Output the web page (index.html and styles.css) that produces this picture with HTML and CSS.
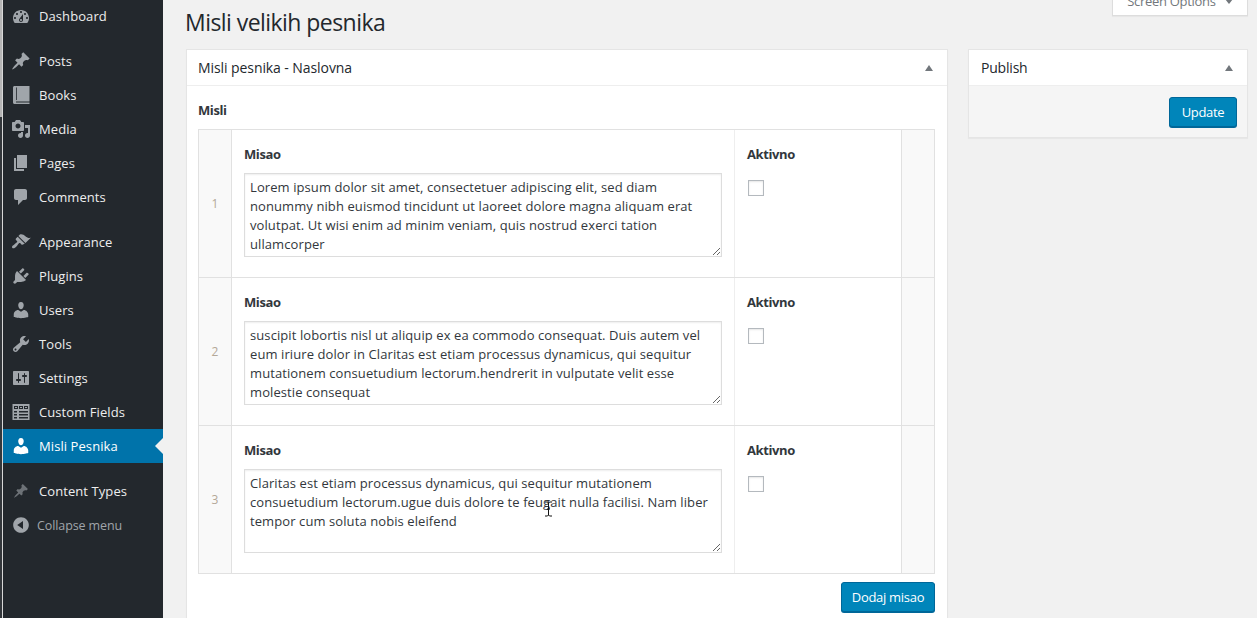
FILE: index.html
```html
<!DOCTYPE html>
<html lang="sr">
<head>
<meta charset="utf-8">
<title>Misli velikih pesnika</title>
<link rel="stylesheet" href="styles.css">
</head>
<body>
<div class="edge"></div>
<nav class="sidebar">
  <ul class="menu">
    <li class="item first"><svg class="icon" viewBox="0 0 20 20"><path d="M3.76 16h12.48c1.1-1.37 1.76-3.11 1.76-5 0-4.42-3.58-8-8-8s-8 3.58-8 8c0 1.89.66 3.63 1.76 5zM10 4c.55 0 1 .45 1 1s-.45 1-1 1-1-.45-1-1 .45-1 1-1zM6 6c.55 0 1 .45 1 1s-.45 1-1 1-1-.45-1-1 .45-1 1-1zm8 0c.55 0 1 .45 1 1s-.45 1-1 1-1-.45-1-1 .45-1 1-1zm-5.37 5.55L12 7v6c0 1.1-.9 2-2 2s-2-.9-2-2c0-.57.24-1.08.63-1.45zM4 10c.55 0 1 .45 1 1s-.45 1-1 1-1-.45-1-1 .45-1 1-1zm12 0c.55 0 1 .45 1 1s-.45 1-1 1-1-.45-1-1 .45-1 1-1zm-5 3c0-.55-.45-1-1-1s-1 .45-1 1 .45 1 1 1 1-.45 1-1z"/></svg><span>Dashboard</span></li>
    <li class="item sep"><svg class="icon" viewBox="0 0 20 20"><path d="M10.44 3.02l1.82-1.82 6.36 6.35-1.83 1.82c-1.05-.68-2.48-.57-3.41.36l-.75.75c-.92.93-1.04 2.35-.35 3.41l-1.83 1.82-2.41-2.41-2.8 2.79c-.42.42-3.38 2.71-3.8 2.29s1.86-3.39 2.28-3.81l2.79-2.79L4.1 9.36l1.83-1.82c1.05.69 2.48.57 3.4-.36l.75-.75c.93-.92 1.05-2.35.36-3.41z"/></svg><span>Posts</span></li>
    <li class="item"><svg class="icon" viewBox="0 0 20 20"><path fill-rule="evenodd" d="M3.5 1H18.500v15.500H5v1h13.500V19H3.500C2.700 19 2 18.300 2 17.500V2.500C2 1.700 2.700 1 3.500 1zM5 2.500V15h.8V2.500z"/></svg><span>Books</span></li>
    <li class="item"><svg class="icon" viewBox="0 0 20 20"><path d="M13 11V4c0-.55-.45-1-1-1h-1.670L9 1H5L3.670 3H2c-.55 0-1 .45-1 1v7c0 .55.45 1 1 1h10c.55 0 1-.45 1-1zM7 4.500c1.380 0 2.500 1.120 2.500 2.500S8.380 9.500 7 9.500 4.500 8.380 4.500 7 5.620 4.500 7 4.500zM14 6h5v10.500c0 1.380-1.120 2.500-2.500 2.500S14 17.880 14 16.500s1.120-2.500 2.500-2.500c.17 0 .34.02.5.05V9h-3V6zm-4 8.050V13h2v3.500c0 1.380-1.120 2.500-2.500 2.500S7 17.880 7 16.500 8.120 14 9.500 14c.17 0 .34.02.5.05z" fill-rule="evenodd"/></svg><span>Media</span></li>
    <li class="item"><svg class="icon" viewBox="0 0 20 20"><path d="M6 15V2h10v13H6zm-1 1h8v2H3V5h2v11z"/></svg><span>Pages</span></li>
    <li class="item"><svg class="icon" viewBox="0 0 20 20"><path d="M5 2h9c1.100 0 2 .9 2 2v7c0 1.100-.9 2-2 2h-2l-5 5v-5H5c-1.100 0-2-.9-2-2V4c0-1.100.9-2 2-2z"/></svg><span>Comments</span></li>
    <li class="item sep"><svg class="icon" viewBox="0 0 20 20"><path d="M14.480 11.060L7.410 3.990l1.500-1.500c.5-.56 2.300-.47 3.510.32 1.210.8 1.430 1.280 2.910 2.100 1.180.64 2.450 1.260 4.450.85zm-.71.71L6.700 4.700 4.930 6.470c-.39.39-.39 1.020 0 1.410l1.060 1.060c.39.39.39 1.030 0 1.420-.6.6-1.430 1.110-2.210 1.690-.35.26-.7.53-1.010.84C1.430 13.230.4 14.950 1.400 15.950s2.730-.03 4.020-1.380c.31-.31.59-.66.85-1.010.58-.78 1.080-1.610 1.690-2.210.39-.39 1.020-.39 1.410 0l1.060 1.060c.39.39 1.020.39 1.410 0z"/></svg><span>Appearance</span></li>
    <li class="item"><svg class="icon" viewBox="0 0 20 20"><path d="M13.110 4.360L9.870 7.600 8 5.730l3.240-3.240c.35-.34 1.050-.2 1.560.32.52.51.66 1.210.31 1.550zm-8 1.770l.91-1.120 9.010 9.010-1.190.84c-.71.71-2.630 1.160-3.820 1.160H6.140L4.900 17.260c-.59.59-1.540.59-2.120 0-.59-.58-.59-1.530 0-2.120l1.240-1.240v-3.880c0-1.130.4-3.190 1.090-3.890zm7.260 3.970l3.240-3.240c.34-.35 1.040-.21 1.550.31.52.51.66 1.210.31 1.550l-3.240 3.250z"/></svg><span>Plugins</span></li>
    <li class="item"><svg class="icon" viewBox="0 0 20 20"><use href="#user"/></svg><span>Users</span></li>
    <li class="item"><svg class="icon" viewBox="0 0 20 20"><path fill-rule="evenodd" d="M16.680 9.770c-1.340 1.340-3.300 1.670-4.950.99l-5.410 6.520c-.99.99-2.590.99-3.580 0s-.99-2.590 0-3.570l6.520-5.420c-.68-1.650-.35-3.610.99-4.950 1.280-1.280 3.120-1.620 4.720-1.060l-2.890 2.890 2.820 2.820 2.860-2.870c.53 1.580.18 3.390-1.080 4.650zM3.810 16.210c.4.39 1.040.39 1.430 0 .4-.4.4-1.040 0-1.430-.39-.4-1.030-.4-1.430 0-.39.39-.39 1.030 0 1.430z"/></svg><span>Tools</span></li>
    <li class="item"><svg class="icon" viewBox="0 0 20 20"><path fill-rule="evenodd" d="M18 16V4c0-.55-.45-1-1-1H3c-.55 0-1 .45-1 1v12c0 .55.45 1 1 1h14c.55 0 1-.45 1-1zM8 11h1c.55 0 1 .45 1 1s-.45 1-1 1H8v1.500c0 .28-.22.5-.5.5s-.5-.22-.5-.5V13H6c-.55 0-1-.45-1-1s.45-1 1-1h1V5.500c0-.28.22-.5.5-.5s.5.22.5.5V11zm5-2h-1c-.55 0-1-.45-1-1s.45-1 1-1h1V5.500c0-.28.22-.5.5-.5s.5.22.5.5V7h1c.55 0 1 .45 1 1s-.45 1-1 1h-1v5.500c0 .28-.22.5-.5.5s-.5-.22-.5-.5V9z"/></svg><span>Settings</span></li>
    <li class="item"><svg class="icon" viewBox="0 0 20 20"><path fill-rule="evenodd" d="M1.500 2h17v16h-17zM3 4v3h4V4zM8 4v3h4V4zM13 4v3h4V4zM4 5h2v1H4zM9 5h2v1H9zM14 5h2v1h-2zM3 9v1.500h3V9zM8 9v1.500h9V9zM3 12v1.500h3V12zM8 12v1.500h9V12zM3 15v1.500h3V15zM8 15v1.500h9V15z"/></svg><span>Custom Fields</span></li>
    <li class="item current"><svg class="icon" viewBox="0 0 20 20"><use href="#user"/></svg><span>Misli Pesnika</span></li>
    <li class="item sep types"><svg class="icon" viewBox="0 0 20 20"><path d="M10.440 3.020l1.820-1.820 6.360 6.350-1.830 1.820c-1.050-.68-2.480-.57-3.410.36l-.75.75c-.92.93-1.040 2.350-.35 3.410l-1.830 1.820-2.410-2.410-2.800 2.790c-.42.42-3.380 2.710-3.800 2.290s1.860-3.390 2.280-3.810l2.790-2.790L4.100 9.360l1.830-1.820c1.050.69 2.480.57 3.400-.36l.75-.75c.93-.92 1.050-2.350.36-3.410z"/></svg><span>Content Types</span></li>
    <li class="item collapse"><svg class="icon" viewBox="0 0 20 20"><path d="M10 2.160c4.330 0 7.840 3.510 7.840 7.840s-3.510 7.840-7.840 7.840S2.160 14.330 2.160 10 5.710 2.160 10 2.160zm2 11.720V6.120L6.180 9.970z"/></svg><span>Collapse menu</span></li>
  </ul>
  <svg class="defs" width="0" height="0"><defs><path id="user" d="M10 9.250c-2.270 0-2.730-3.440-2.730-3.440C7 4.020 7.820 2 9.970 2c2.160 0 2.980 2.020 2.710 3.810 0 0-.41 3.440-2.680 3.440zm0 2.570L12.720 10c2.390 0 4.520 2.330 4.520 4.530v2.490s-3.650 1.130-7.240 1.130c-3.650 0-7.240-1.130-7.240-1.130v-2.490c0-2.250 1.940-4.480 4.470-4.480z"/></defs></svg>
</nav>
<main class="content">
  <header class="top">
    <h1 class="title">Misli velikih pesnika</h1>
    <button class="screen-options" type="button">Screen Options <i class="caret-down"></i></button>
  </header>
  <div class="columns">
    <section class="box">
      <h2 class="box-head">Misli pesnika - Naslovna <i class="caret-up"></i></h2>
      <div class="box-body">
        <div class="label field-label">Misli</div>
        <div class="repeater">
          <div class="row">
            <div class="order">1</div>
            <div class="cell main-cell">
              <div class="label">Misao</div>
              <textarea class="area">Lorem ipsum dolor sit amet, consectetuer adipiscing elit, sed diam nonummy nibh euismod tincidunt ut laoreet dolore magna aliquam erat volutpat. Ut wisi enim ad minim veniam, quis nostrud exerci tation ullamcorper</textarea>
            </div>
            <div class="cell active-cell">
              <div class="label">Aktivno</div>
              <input class="check" type="checkbox">
            </div>
            <div class="remove"></div>
          </div>
          <div class="row">
            <div class="order">2</div>
            <div class="cell main-cell">
              <div class="label">Misao</div>
              <textarea class="area">suscipit lobortis nisl ut aliquip ex ea commodo consequat. Duis autem vel eum iriure dolor in Claritas est etiam processus dynamicus, qui sequitur mutationem consuetudium lectorum.hendrerit in vulputate velit esse molestie consequat</textarea>
            </div>
            <div class="cell active-cell">
              <div class="label">Aktivno</div>
              <input class="check" type="checkbox">
            </div>
            <div class="remove"></div>
          </div>
          <div class="row">
            <div class="order">3</div>
            <div class="cell main-cell">
              <div class="label">Misao</div>
              <div class="area-wrap">
                <textarea class="area">Claritas est etiam processus dynamicus, qui sequitur mutationem consuetudium lectorum.ugue duis dolore te feugait nulla facilisi. Nam liber tempor cum soluta nobis eleifend</textarea>
                <svg class="cursor" viewBox="0 0 9 16" width="9" height="16"><path d="M1 1h2.500l1 1 1-1H8M4.500 2v12M1 15h2.500l1-1 1 1H8M3 8h3" fill="none" stroke="#111" stroke-width="1"/></svg>
              </div>
            </div>
            <div class="cell active-cell">
              <div class="label">Aktivno</div>
              <input class="check" type="checkbox">
            </div>
            <div class="remove"></div>
          </div>
        </div>
        <div class="actions"><button class="btn add" type="button">Dodaj misao</button></div>
      </div>
    </section>
    <aside class="box publish">
      <h2 class="box-head">Publish <i class="caret-up"></i></h2>
      <div class="publish-foot"><button class="btn update" type="button">Update</button></div>
    </aside>
  </div>
</main>
</body>
</html>
```
FILE: styles.css
```css
* { box-sizing: border-box; }
html, body { height: 100%; }
body {
  margin: 0;
  display: flex;
  height: 618px;
  overflow: hidden;
  background: #f1f1f1;
  color: #23282d;
  font: 13px/19px "Open Sans", "Noto Sans", sans-serif;
  letter-spacing: 0.08px;
}
.edge {
  width: 3px;
  flex: none;
  background:
    linear-gradient(#b5b5b5, #b5b5b5) 0 0 / 2px 117px no-repeat,
    linear-gradient(90deg, #33373b 0 2px, #d8d8d8 2px);
}
.sidebar { width: 160px; flex: none; background: #23282d; }
.menu { list-style: none; margin: 0; padding: 0; }
.item {
  display: flex;
  align-items: center;
  height: 34px;
  padding-left: 8px;
  color: #eee;
  position: relative;
}
.item.first { height: 33px; }
.item.sep { margin-top: 11px; }
.icon { width: 20px; height: 20px; margin-right: 8px; fill: #a0a5aa; flex: none; }
.current { background: #0073aa; color: #fff; }
.current .icon { fill: #fff; }
.current::after {
  content: "";
  position: absolute;
  right: 0;
  top: 9px;
  border: 8px solid transparent;
  border-right-color: #f1f1f1;
  border-left-width: 0;
}
.types .icon { fill: #6d7277; width: 16px; height: 16px; margin: 0 10px 0 2px; }
.collapse { color: #a0a5aa; font-size: 12.500px; letter-spacing: -0.1px; }
.collapse .icon { margin-right: 6px; }
.defs { position: absolute; }

.content { flex: 1; min-width: 0; padding: 0 9px 0 23px; }
.top { display: flex; justify-content: space-between; height: 49px; }
.title { margin: 6px 0 0 -1px; font-size: 23px; line-height: 32px; font-weight: 400; letter-spacing: -0.55px; }
.screen-options {
  width: 136px;
  height: 29px;
  margin: -13px 0 0;
  background: #fff;
  border: 1px solid #ddd;
  border-top: 0;
  box-shadow: 0 1px 1px rgba(0,0,0,.04);
  color: #72777c;
  font: inherit;
  letter-spacing: -0.3px;
  padding: 0;
}
.caret-down, .caret-up { display: inline-block; width: 0; height: 0; border: 4px solid transparent; }
.caret-down { border-top: 5px solid #72777c; border-bottom: 0; margin-left: 6px; vertical-align: 2px; }
.columns { display: grid; grid-template-columns: 762px 280px; gap: 20px; align-items: start; }
.box { background: #fff; border: 1px solid #e5e5e5; box-shadow: 0 1px 1px rgba(0,0,0,.04); }
.box-head {
  display: flex;
  justify-content: space-between;
  align-items: center;
  height: 36px;
  margin: 0;
  padding: 0 14px 0 11px;
  border-bottom: 1px solid #eee;
  font-size: 14px;
  font-weight: 400;
  letter-spacing: -0.08px;
}
.publish .box-head { padding-left: 12px; letter-spacing: -0.2px; }
.caret-up { border-bottom: 6px solid #72777c; border-top: 0; }
.box-body { padding: 15px 12px 6px 11px; }
.label { font-weight: 700; color: #32373c; letter-spacing: -0.4px; }
.field-label { margin-bottom: 9px; }
.repeater { border: 1px solid #e1e1e1; width: 737px; }
.row { display: grid; grid-template-columns: 33px 503px 167px 1fr; height: 148px; border-bottom: 1px solid #e1e1e1; }
.row:last-child { border-bottom: 0; height: 147px; }
.order {
  background: #f9f9f9;
  border-right: 1px solid #e1e1e1;
  color: #b4a898;
  font-size: 12px;
  display: flex;
  align-items: center;
  justify-content: center;
}
.cell { padding: 15px 12px 0; border-right: 1px solid #eee; }
.active-cell { border-right: 1px solid #e1e1e1; }
.remove { background: #f9f9f9; }
.area {
  display: block;
  width: 478px;
  height: 84px;
  margin-top: 9px;
  padding: 4px 5px 2px;
  border: 1px solid #ddd;
  box-shadow: inset 0 1px 2px rgba(0,0,0,.07);
  background: #fff;
  color: #32373c;
  font: inherit;
  letter-spacing: 0.09px;
  outline: 0;
  overflow: hidden;
}
.area-wrap { position: relative; }
.cursor { position: absolute; left: 300px; top: 32px; }
.check {
  appearance: none;
  display: block;
  width: 16px;
  height: 16px;
  margin: 16px 0 0 1px;
  border: 1px solid #b4b9be;
  background: #fff;
  box-shadow: inset 0 1px 2px rgba(0,0,0,.1);
}
.actions { display: flex; justify-content: flex-end; margin: 8px 0 0; }
.btn {
  height: 30px;
  padding: 0;
  background: #0085ba;
  border: 1px solid #006799;
  border-radius: 3px;
  color: #fff;
  font: inherit;
  letter-spacing: -0.3px;
  box-shadow: 0 1px 0 #006799;
}
.add { width: 94px; }
.publish-foot { display: flex; justify-content: flex-end; padding: 11px 10px 10px; background: #f5f5f5; }
.update { width: 68px; }
```
